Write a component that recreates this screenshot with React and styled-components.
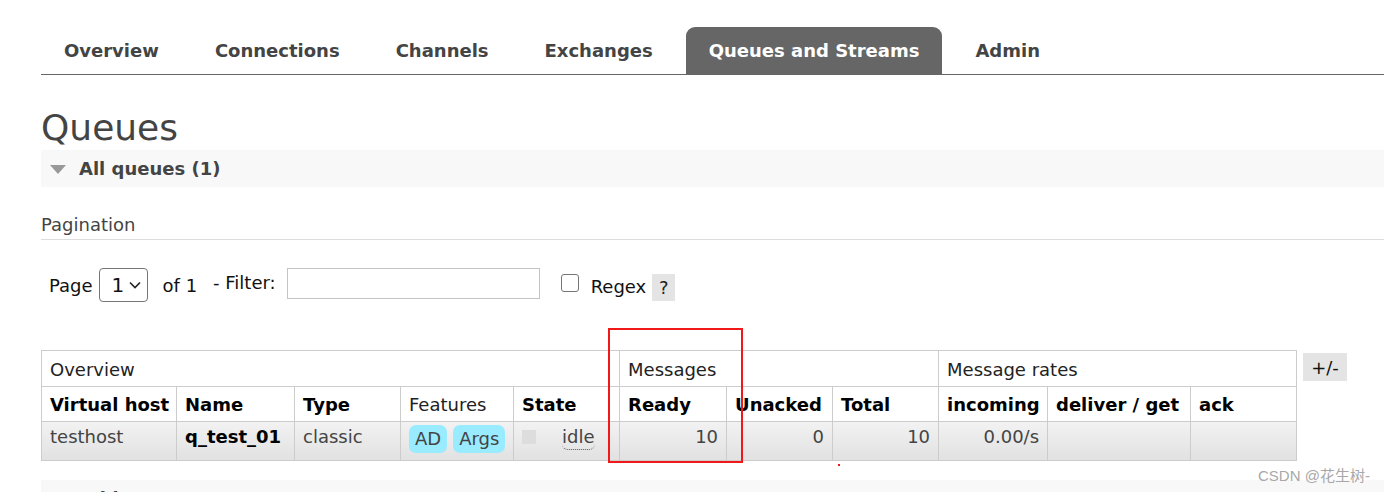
import styled, { createGlobalStyle } from 'styled-components';

const GlobalStyle = createGlobalStyle`
  html, body {
    margin: 0;
    padding: 0;
    background: #fff;
  }
  body {
    font-family: "DejaVu Sans", Verdana, sans-serif;
    font-size: 18px;
    color: #444;
    overflow: hidden;
  }
`;

const tabs = ['Overview', 'Connections', 'Channels', 'Exchanges', 'Queues and Streams', 'Admin'];

const columns = [
  { label: 'Virtual host', width: 135, bold: true },
  { label: 'Name', width: 118, bold: true },
  { label: 'Type', width: 106, bold: true },
  { label: 'Features', width: 113 },
  { label: 'State', width: 106, bold: true },
  { label: 'Ready', width: 107, bold: true },
  { label: 'Unacked', width: 106, bold: true },
  { label: 'Total', width: 106, bold: true },
  { label: 'incoming', width: 109, bold: true },
  { label: 'deliver / get', width: 143, bold: true },
  { label: 'ack', width: 106, bold: true },
];

export default function App() {
  return (
    <Page>
      <GlobalStyle />
      <Tabs>
        {tabs.map((t) => (
          <Tab key={t} $active={t === 'Queues and Streams'}>{t}</Tab>
        ))}
      </Tabs>

      <Title>Queues</Title>
      <SectionBar>
        <Triangle />
        <span>All queues (1)</span>
      </SectionBar>

      <SubTitle>Pagination</SubTitle>

      <FilterRow>
        <span>Page</span>
        <FakeSelect>
          <span>1</span>
          <svg width="12" height="8" viewBox="0 0 12 8">
            <path d="M1 1.5 L6 6.5 L11 1.5" fill="none" stroke="#222" strokeWidth="1.6" />
          </svg>
        </FakeSelect>
        <OfText>of 1</OfText>
        <FilterLabel>- Filter:</FilterLabel>
        <FilterInput />
        <Check />
        <RegexLabel>Regex</RegexLabel>
        <Help>?</Help>
      </FilterRow>

      <TableRow>
        <Table>
          <colgroup>
            {columns.map((c) => (
              <col key={c.label} style={{ width: c.width }} />
            ))}
          </colgroup>
          <thead>
            <GroupRow>
              <GroupCell colSpan={5}>Overview</GroupCell>
              <GroupCell colSpan={3}>Messages</GroupCell>
              <GroupCell colSpan={3}>Message rates</GroupCell>
            </GroupRow>
            <HeadRow>
              {columns.map((c) => (
                <HeadCell key={c.label} $bold={c.bold}>{c.label}</HeadCell>
              ))}
            </HeadRow>
          </thead>
          <tbody>
            <DataRow>
              <Cell>testhost</Cell>
              <Cell $bold>q_test_01</Cell>
              <Cell>classic</Cell>
              <Cell>
                <Badges>
                  <Badge>AD</Badge>
                  <Badge>Args</Badge>
                </Badges>
              </Cell>
              <Cell>
                <StateBox>
                  <StateDot />
                  <Idle>idle</Idle>
                </StateBox>
              </Cell>
              <Cell $right>10</Cell>
              <Cell $right>0</Cell>
              <Cell $right>10</Cell>
              <Cell $right>0.00/s</Cell>
              <Cell />
              <Cell />
            </DataRow>
          </tbody>
        </Table>
        <ToggleButton>+/-</ToggleButton>
      </TableRow>

      <NextBar>
        <Triangle />
        <span>Add a new queue</span>
      </NextBar>

      <Highlight />
      <RedDot />
      <Watermark>CSDN @花生树-</Watermark>
    </Page>
  );
}

const Page = styled.div`
  position: relative;
  padding: 27px 0 0 41px;
  height: 492px;
  box-sizing: border-box;
`;

const Tabs = styled.div`
  display: flex;
  gap: 10px;
  height: 47px;
  border-bottom: 1px solid #666;
`;

const Tab = styled.div`
  display: flex;
  align-items: center;
  padding: 0 23px;
  height: 47px;
  box-sizing: border-box;
  border-radius: 9px 9px 0 0;
  font-weight: bold;
  font-size: 18px;
  color: ${(p) => (p.$active ? '#fff' : '#444')};
  background: ${(p) => (p.$active ? '#666' : 'transparent')};
  white-space: nowrap;
`;

const Title = styled.h1`
  margin: 31px 0 0 0;
  font-size: 36px;
  font-weight: normal;
  line-height: 44px;
  height: 44px;
  color: #444;
`;

const SectionBar = styled.div`
  display: flex;
  align-items: center;
  gap: 13px;
  height: 37px;
  padding-left: 9px;
  background: #f8f8f8;
  font-weight: bold;
  font-size: 18px;
  color: #444;
`;

const NextBar = styled(SectionBar)`
  margin-top: 19px;
`;

const Triangle = styled.span`
  width: 0;
  height: 0;
  border-left: 8px solid transparent;
  border-right: 8px solid transparent;
  border-top: 9px solid #999;
  margin-top: 2px;
`;

const SubTitle = styled.div`
  margin-top: 24px;
  height: 28px;
  line-height: 28px;
  border-bottom: 1px solid #ddd;
  font-size: 18px;
  color: #444;
`;

const FilterRow = styled.div`
  display: flex;
  align-items: center;
  margin-top: 27px;
  padding-left: 8px;
  height: 36px;
  font-size: 18px;
  color: #111;
`;

const FakeSelect = styled.div`
  display: flex;
  align-items: center;
  justify-content: space-between;
  box-sizing: border-box;
  width: 49px;
  height: 34px;
  margin-left: 6px;
  padding: 0 6px 0 12px;
  border: 1px solid #767676;
  border-radius: 4px;
  font-size: 20px;
  color: #111;
`;

const OfText = styled.span`
  margin-left: 15px;
`;

const FilterLabel = styled.span`
  margin-left: 16px;
  margin-top: -5px;
`;

const FilterInput = styled.div`
  box-sizing: border-box;
  width: 253px;
  height: 31px;
  margin-left: 11px;
  margin-top: -3px;
  border: 1px solid #c4c4c4;
  background: #fff;
`;

const Check = styled.span`
  box-sizing: border-box;
  width: 18px;
  height: 18px;
  margin-left: 21px;
  margin-top: -4px;
  border: 1.5px solid #767676;
  border-radius: 3px;
  background: #fff;
`;

const RegexLabel = styled.span`
  margin-left: 12px;
  margin-top: 2px;
`;

const Help = styled.span`
  display: flex;
  align-items: center;
  justify-content: center;
  width: 23px;
  height: 27px;
  margin-left: 6px;
  margin-top: 4px;
  background: #e4e4e4;
  color: #222;
`;

const TableRow = styled.div`
  display: flex;
  align-items: flex-start;
  gap: 6px;
  margin-top: 47px;
`;

const Table = styled.table`
  border-collapse: collapse;
  table-layout: fixed;
  width: 1256px;
  font-size: 18px;
  border: 1px solid #ccc;
`;

const GroupRow = styled.tr`
  height: 36px;
`;

const HeadRow = styled.tr`
  height: 35px;
`;

const DataRow = styled.tr`
  height: 39px;
  background: linear-gradient(#f2f2f2, #e1e1e1);
`;

const GroupCell = styled.th`
  border: 1px solid #ccc;
  padding: 2px 8px 0 8px;
  text-align: left;
  font-weight: normal;
  color: #222;
  white-space: nowrap;
`;

const HeadCell = styled.th`
  border: 1px solid #ccc;
  padding: 0 8px;
  text-align: left;
  font-weight: ${(p) => (p.$bold ? 'bold' : 'normal')};
  color: ${(p) => (p.$bold ? '#000' : '#222')};
  white-space: nowrap;
  overflow: visible;
`;

const Cell = styled.td`
  border: 1px solid #ccc;
  padding: 3px 8px 0 8px;
  vertical-align: top;
  text-align: ${(p) => (p.$right ? 'right' : 'left')};
  font-weight: ${(p) => (p.$bold ? 'bold' : 'normal')};
  color: ${(p) => (p.$bold ? '#000' : '#444')};
  white-space: nowrap;
  line-height: 24px;
`;

const Badges = styled.div`
  display: flex;
  gap: 6px;
`;

const Badge = styled.span`
  display: inline-flex;
  align-items: center;
  height: 28px;
  padding: 0 6px;
  border-radius: 7px;
  background: #99ebff;
  color: #444;
`;

const StateBox = styled.div`
  display: flex;
  align-items: flex-start;
`;

const StateDot = styled.span`
  width: 14px;
  height: 14px;
  margin-top: 5px;
  background: #ddd;
`;

const Idle = styled.span`
  margin-left: 26px;
  border-bottom: 1px dotted #555;
  border-radius: 0 0 6px 6px;
  line-height: 24px;
`;

const ToggleButton = styled.div`
  display: flex;
  align-items: center;
  justify-content: center;
  width: 44px;
  height: 28px;
  margin-top: 3px;
  background: #e4e4e4;
  color: #111;
  font-size: 18px;
`;

const Highlight = styled.div`
  position: absolute;
  left: 608px;
  top: 328px;
  width: 135px;
  height: 135px;
  box-sizing: border-box;
  border: 2px solid #f01818;
  pointer-events: none;
`;

const RedDot = styled.div`
  position: absolute;
  left: 838px;
  top: 464px;
  width: 2px;
  height: 2px;
  background: #f01818;
`;

const Watermark = styled.div`
  position: absolute;
  left: 1258px;
  top: 464px;
  font-family: "Liberation Sans", "Noto Sans CJK SC", sans-serif;
  font-size: 15px;
  color: #a8a8a8;
  white-space: nowrap;
`;
